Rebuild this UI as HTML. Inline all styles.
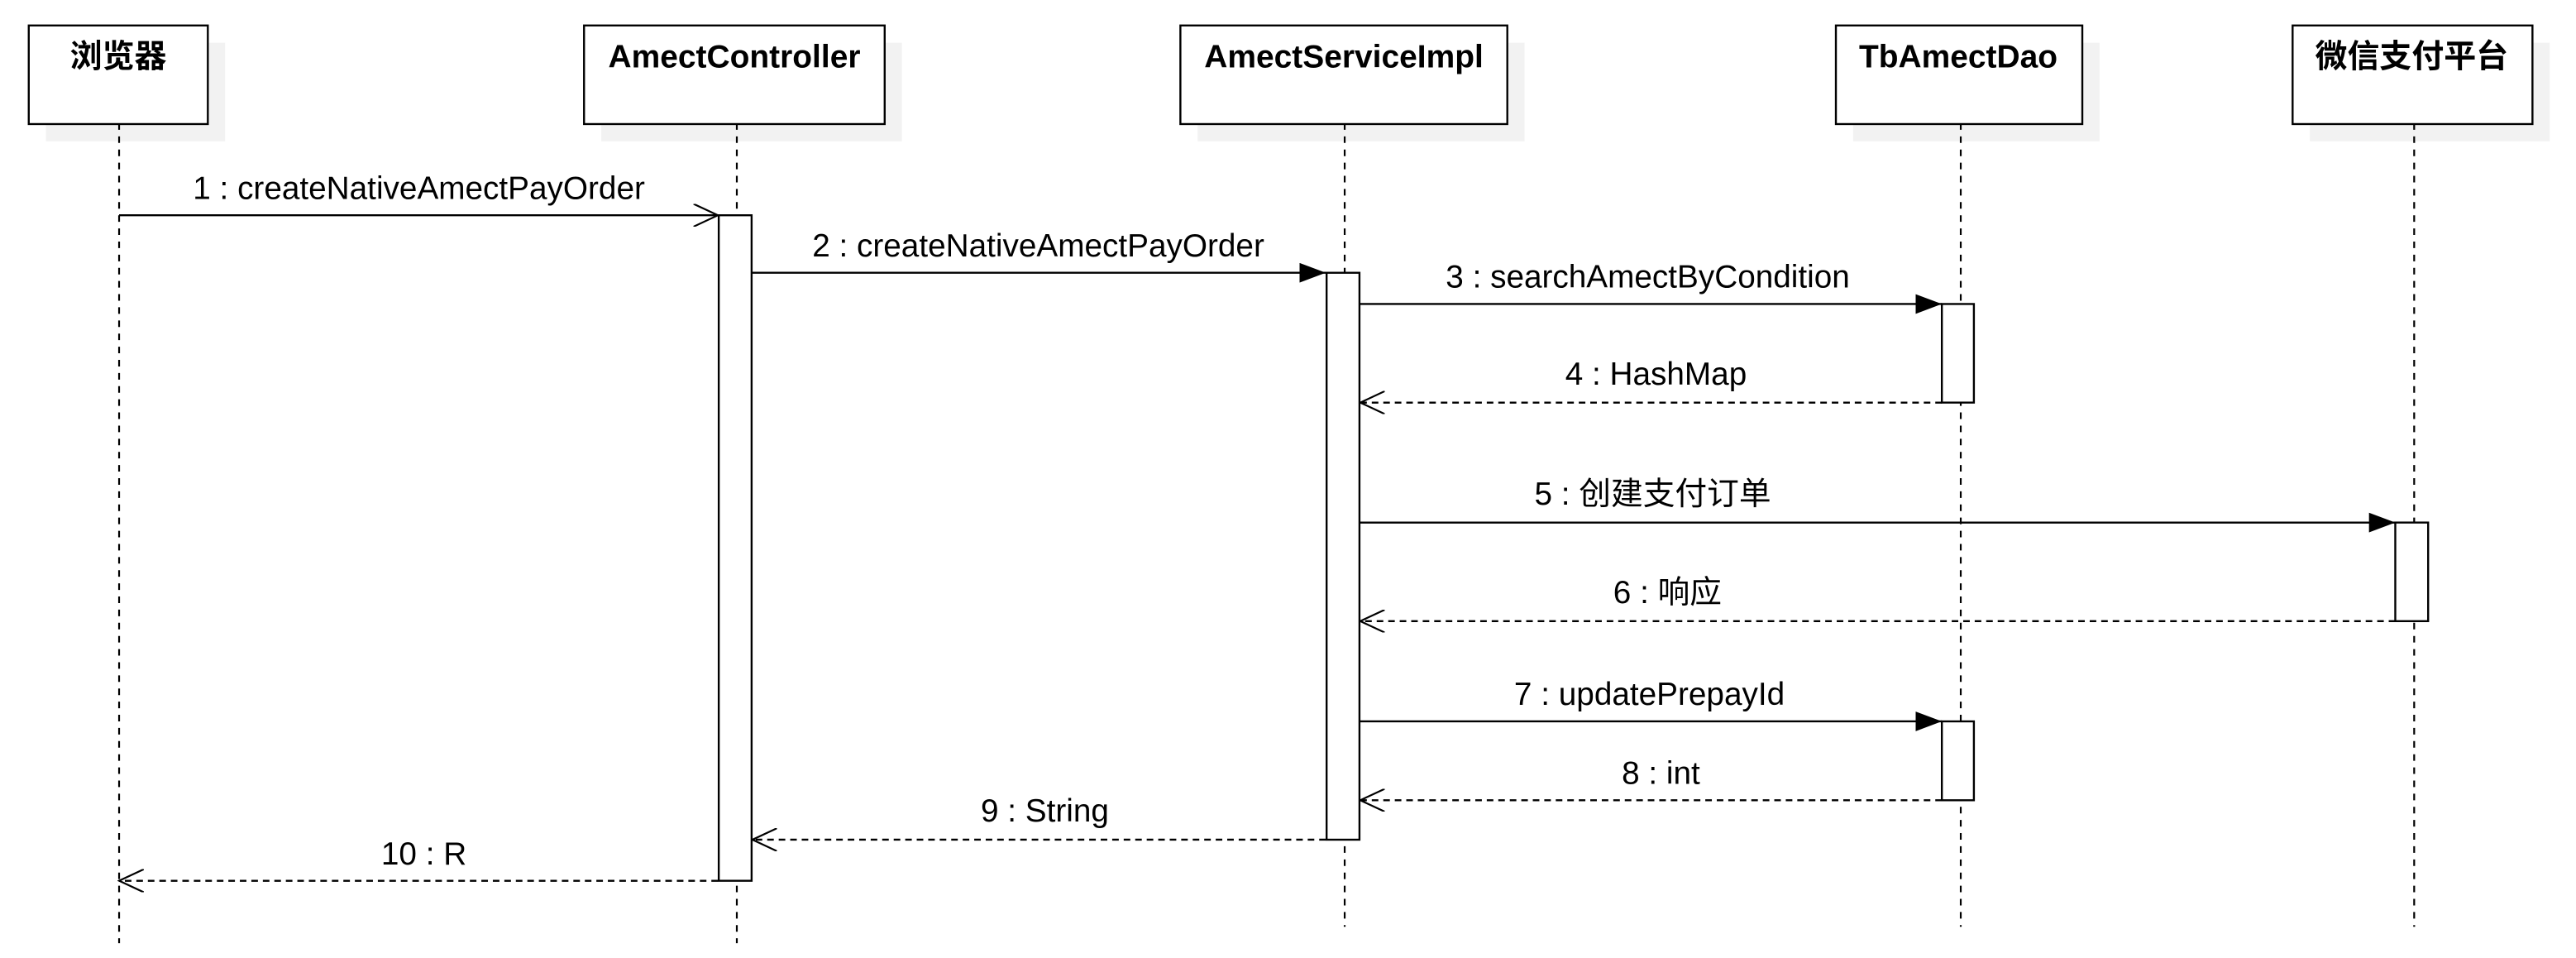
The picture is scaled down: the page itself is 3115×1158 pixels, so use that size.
<!DOCTYPE html>
<html><head><meta charset="utf-8"><style>html,body{margin:0;padding:0;background:#fff}svg{display:block}</style></head>
<body>
<svg width="3115" height="1158" viewBox="0 0 1568 583" preserveAspectRatio="none" xmlns="http://www.w3.org/2000/svg" font-family="'Liberation Sans','Noto Sans CJK SC',sans-serif">
<defs>
<marker id="f" markerWidth="16" markerHeight="12" refX="16" refY="6" orient="auto" markerUnits="userSpaceOnUse"><path d="M0,0 L16,6 L0,12 Z" fill="#000"/></marker>
<marker id="o" markerWidth="16" markerHeight="14" refX="15" refY="7" orient="auto" markerUnits="userSpaceOnUse"><path d="M0,0 L15,7 L0,14" fill="none" stroke="#000" stroke-width="1.1"/></marker>
</defs>
<g fill="#f2f2f2">
<rect x="28" y="26" width="109" height="60"/>
<rect x="366" y="26" width="183" height="60"/>
<rect x="729" y="26" width="199" height="60"/>
<rect x="1128" y="26" width="150" height="60"/>
<rect x="1406" y="26" width="146" height="60"/>
</g>
<g stroke="#000" stroke-width="1.1" stroke-dasharray="4 4" fill="none">
<line x1="72.5" y1="75" x2="72.5" y2="574"/>
<line x1="448.5" y1="75" x2="448.5" y2="574"/>
<line x1="818.5" y1="75" x2="818.5" y2="564"/>
<line x1="1193.5" y1="75" x2="1193.5" y2="564"/>
<line x1="1469.5" y1="75" x2="1469.5" y2="564"/>
</g>
<g stroke="#000" stroke-width="1.2" fill="#fff">
<rect x="17.5" y="15.5" width="109" height="60"/>
<rect x="355.5" y="15.5" width="183" height="60"/>
<rect x="718.5" y="15.5" width="199" height="60"/>
<rect x="1117.5" y="15.5" width="150" height="60"/>
<rect x="1395.5" y="15.5" width="146" height="60"/>
<rect x="437.5" y="131" width="20" height="405"/>
<rect x="807.5" y="166" width="20" height="345"/>
<rect x="1182" y="185" width="19.5" height="60"/>
<rect x="1182" y="439" width="19.5" height="48"/>
<rect x="1458" y="318" width="20" height="60"/>
</g>
<g font-weight="bold" font-size="19.6" text-anchor="middle">
<text x="72" y="41">浏览器</text>
<text x="447" y="41">AmectController</text>
<text x="818" y="41">AmectServiceImpl</text>
<text x="1192" y="41">TbAmectDao</text>
<text x="1468" y="41">微信支付平台</text>
</g>
<g stroke="#000" stroke-width="1.2" fill="none">
<line x1="72.5" y1="131" x2="437" y2="131" marker-end="url(#o)"/>
<line x1="458" y1="166" x2="807" y2="166" marker-end="url(#f)"/>
<line x1="828" y1="185" x2="1182" y2="185" marker-end="url(#f)"/>
<line x1="828" y1="318" x2="1458" y2="318" marker-end="url(#f)"/>
<line x1="828" y1="439" x2="1182" y2="439" marker-end="url(#f)"/>
</g>
<g stroke="#000" stroke-width="1.2" fill="none" stroke-dasharray="4 3">
<line x1="1182" y1="245" x2="828" y2="245" marker-end="url(#o)"/>
<line x1="1458" y1="378" x2="828" y2="378" marker-end="url(#o)"/>
<line x1="1182" y1="487" x2="828" y2="487" marker-end="url(#o)"/>
<line x1="807" y1="511" x2="458" y2="511" marker-end="url(#o)"/>
<line x1="437" y1="536" x2="72.5" y2="536" marker-end="url(#o)"/>
</g>
<g font-size="19.5" text-anchor="middle">
<text x="255" y="121">1 : createNativeAmectPayOrder</text>
<text x="632" y="156">2 : createNativeAmectPayOrder</text>
<text x="1003" y="175">3 : searchAmectByCondition</text>
<text x="1008" y="234">4 : HashMap</text>
<text x="1006" y="307">5 : 创建支付订单</text>
<text x="1015" y="367">6 : 响应</text>
<text x="1004" y="429">7 : updatePrepayId</text>
<text x="1011" y="477">8 : int</text>
<text x="636" y="500">9 : String</text>
<text x="258" y="526">10 : R</text>
</g>
</svg>
</body></html>
